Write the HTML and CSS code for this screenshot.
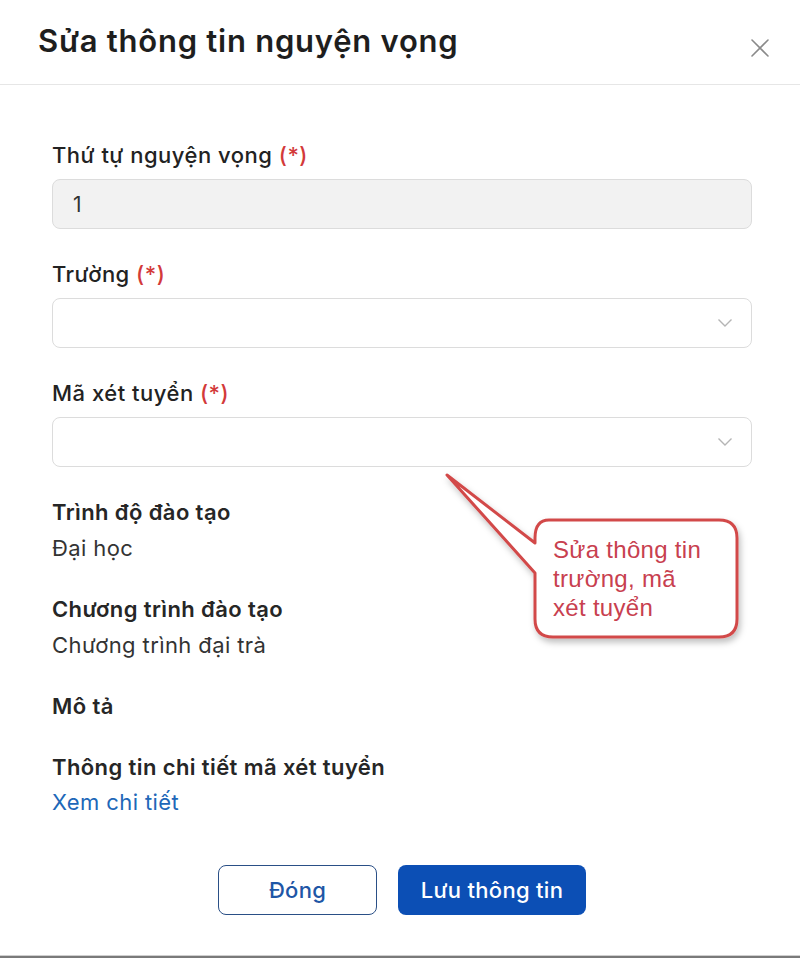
FILE: index.html
```html
<!DOCTYPE html>
<html lang="vi">
<head>
<meta charset="utf-8">
<title>Sửa thông tin nguyện vọng</title>
<link rel="stylesheet" href="styles.css">
</head>
<body>
<div class="modal">
  <header class="modal-header">
    <h1 class="modal-title">Sửa thông tin nguyện vọng</h1>
    <button class="close-btn" aria-label="Đóng">
      <svg width="20" height="20" viewBox="0 0 20 20"><path d="M2 2 L18 18 M18 2 L2 18" stroke="#8a8a8a" stroke-width="1.6" fill="none" stroke-linecap="round"/></svg>
    </button>
  </header>
  <main class="modal-body">
    <div class="field">
      <label class="label">Thứ tự nguyện vọng <span class="req">(*)</span></label>
      <div class="input input-disabled">1</div>
    </div>
    <div class="field">
      <label class="label">Trường <span class="req">(*)</span></label>
      <div class="input select">
        <span class="select-value"></span>
        <svg class="chevron" width="16" height="10" viewBox="0 0 16 10"><path d="M1.5 1.5 L8 8 L14.5 1.5" stroke="#b5b5b5" stroke-width="1.4" fill="none"/></svg>
      </div>
    </div>
    <div class="field">
      <label class="label">Mã xét tuyển <span class="req">(*)</span></label>
      <div class="input select">
        <span class="select-value"></span>
        <svg class="chevron" width="16" height="10" viewBox="0 0 16 10"><path d="M1.5 1.5 L8 8 L14.5 1.5" stroke="#b5b5b5" stroke-width="1.4" fill="none"/></svg>
      </div>
    </div>
    <div class="info">
      <div class="info-label">Trình độ đào tạo</div>
      <div class="info-value">Đại học</div>
    </div>
    <div class="info">
      <div class="info-label">Chương trình đào tạo</div>
      <div class="info-value">Chương trình đại trà</div>
    </div>
    <div class="info">
      <div class="info-label">Mô tả</div>
    </div>
    <div class="info info-last">
      <div class="info-label">Thông tin chi tiết mã xét tuyển</div>
      <a class="link" href="#">Xem chi tiết</a>
    </div>
    <div class="actions">
      <button class="btn btn-outline">Đóng</button>
      <button class="btn btn-primary">Lưu thông tin</button>
    </div>
  </main>
  <div class="callout">
    <svg class="callout-shape" width="320" height="200" viewBox="0 0 320 200">
      <defs>
        <filter id="sh" x="-10%" y="-10%" width="130%" height="130%">
          <feDropShadow dx="2" dy="4" stdDeviation="3" flood-color="#000" flood-opacity="0.25"/>
        </filter>
      </defs>
      <path filter="url(#sh)" d="M108 47 L104 47 Q90 47 90 65 L90 70 L2 2 L90 100 L90 146 Q90 164 108 164 L274 164 Q292 164 292 146 L292 65 Q292 47 274 47 Z" fill="#fff" stroke="#d24a4a" stroke-width="3" stroke-linejoin="round"/>
    </svg>
    <div class="callout-text">Sửa thông tin<br>trường, mã<br>xét tuyển</div>
  </div>
</div>
<div class="bottom-bar"></div>
</body>
</html>
```

FILE: styles.css
```css
* { box-sizing: border-box; }
html, body { margin: 0; padding: 0; background: #fff; }
body {
  font-family: Inter, "Noto Sans", "DejaVu Sans", sans-serif;
  color: #222;
  width: 800px;
  height: 958px;
  position: relative;
  overflow: hidden;
}
.modal { position: relative; }
.modal-header {
  height: 85px;
  border-bottom: 1px solid #e6e6e6;
  display: flex;
  align-items: center;
  justify-content: space-between;
  padding: 0 30px 0 38px;
}
.modal-title {
  margin: 0;
  font-size: 31px;
  font-weight: 600;
  color: #1e1e1e;
  letter-spacing: 0.75px;
  position: relative;
  top: -2px;
}
.close-btn {
  border: 0;
  background: none;
  padding: 0;
  width: 20px;
  height: 20px;
  margin-top: 12px;
  cursor: pointer;
}
.modal-body {
  padding: 58px 48px 0 52px;
  display: flex;
  flex-direction: column;
}
.field { display: flex; flex-direction: column; gap: 12px; margin-bottom: 33px; }
.label {
  font-size: 22px;
  font-weight: 500;
  line-height: 24px;
  letter-spacing: 0.5px;
  color: #222;
}
.req { color: #d33a3a; }
.input {
  height: 50px;
  border: 1px solid #dcdcdc;
  border-radius: 8px;
  padding: 0 20px;
  display: flex;
  align-items: center;
  font-size: 21px;
  color: #333;
}
.input-disabled { background: #f2f2f2; }
.select { justify-content: space-between; background: #fff; padding-right: 18px; }
.chevron { display: block; }
.info { display: flex; flex-direction: column; gap: 12px; margin-bottom: 37px; }
.info-label { font-size: 22px; font-weight: 600; line-height: 24px; letter-spacing: 0.4px; color: #262626; }
.info-value { font-size: 22px; font-weight: 400; line-height: 24px; letter-spacing: 0.4px; color: #333; }
.info-last { margin-bottom: 0; gap: 11px; }
.link {
  font-size: 22px;
  line-height: 24px;
  letter-spacing: 0.4px;
  color: #2067b8;
  text-decoration: none;
}
.actions {
  display: flex;
  justify-content: center;
  gap: 21px;
  margin-top: 51px;
}
.btn {
  height: 50px;
  border-radius: 8px;
  font-family: Inter, "Noto Sans", sans-serif;
  font-size: 22px;
  font-weight: 500;
  letter-spacing: 0.3px;
  cursor: pointer;
}
.btn-outline {
  width: 159px;
  background: #fff;
  border: 1.5px solid #2a4f86;
  color: #1e56a6;
}
.btn-primary {
  width: 188px;
  background: #0c4fb5;
  border: 0;
  color: #fff;
}
.callout {
  position: absolute;
  left: 445px;
  top: 473px;
  width: 320px;
  height: 200px;
}
.callout-shape { position: absolute; left: 0; top: 0; overflow: visible; }
.callout-text {
  position: absolute;
  left: 108px;
  top: 62px;
  font-family: "Liberation Sans", Arial, sans-serif;
  font-size: 24px;
  line-height: 29px;
  letter-spacing: 0.3px;
  color: #c8404f;
}
.bottom-bar {
  position: absolute;
  left: 0;
  bottom: 0;
  width: 800px;
  height: 3px;
  background: #7a7a7a;
  border-top: 1px solid #cfcfcf;
}
```
